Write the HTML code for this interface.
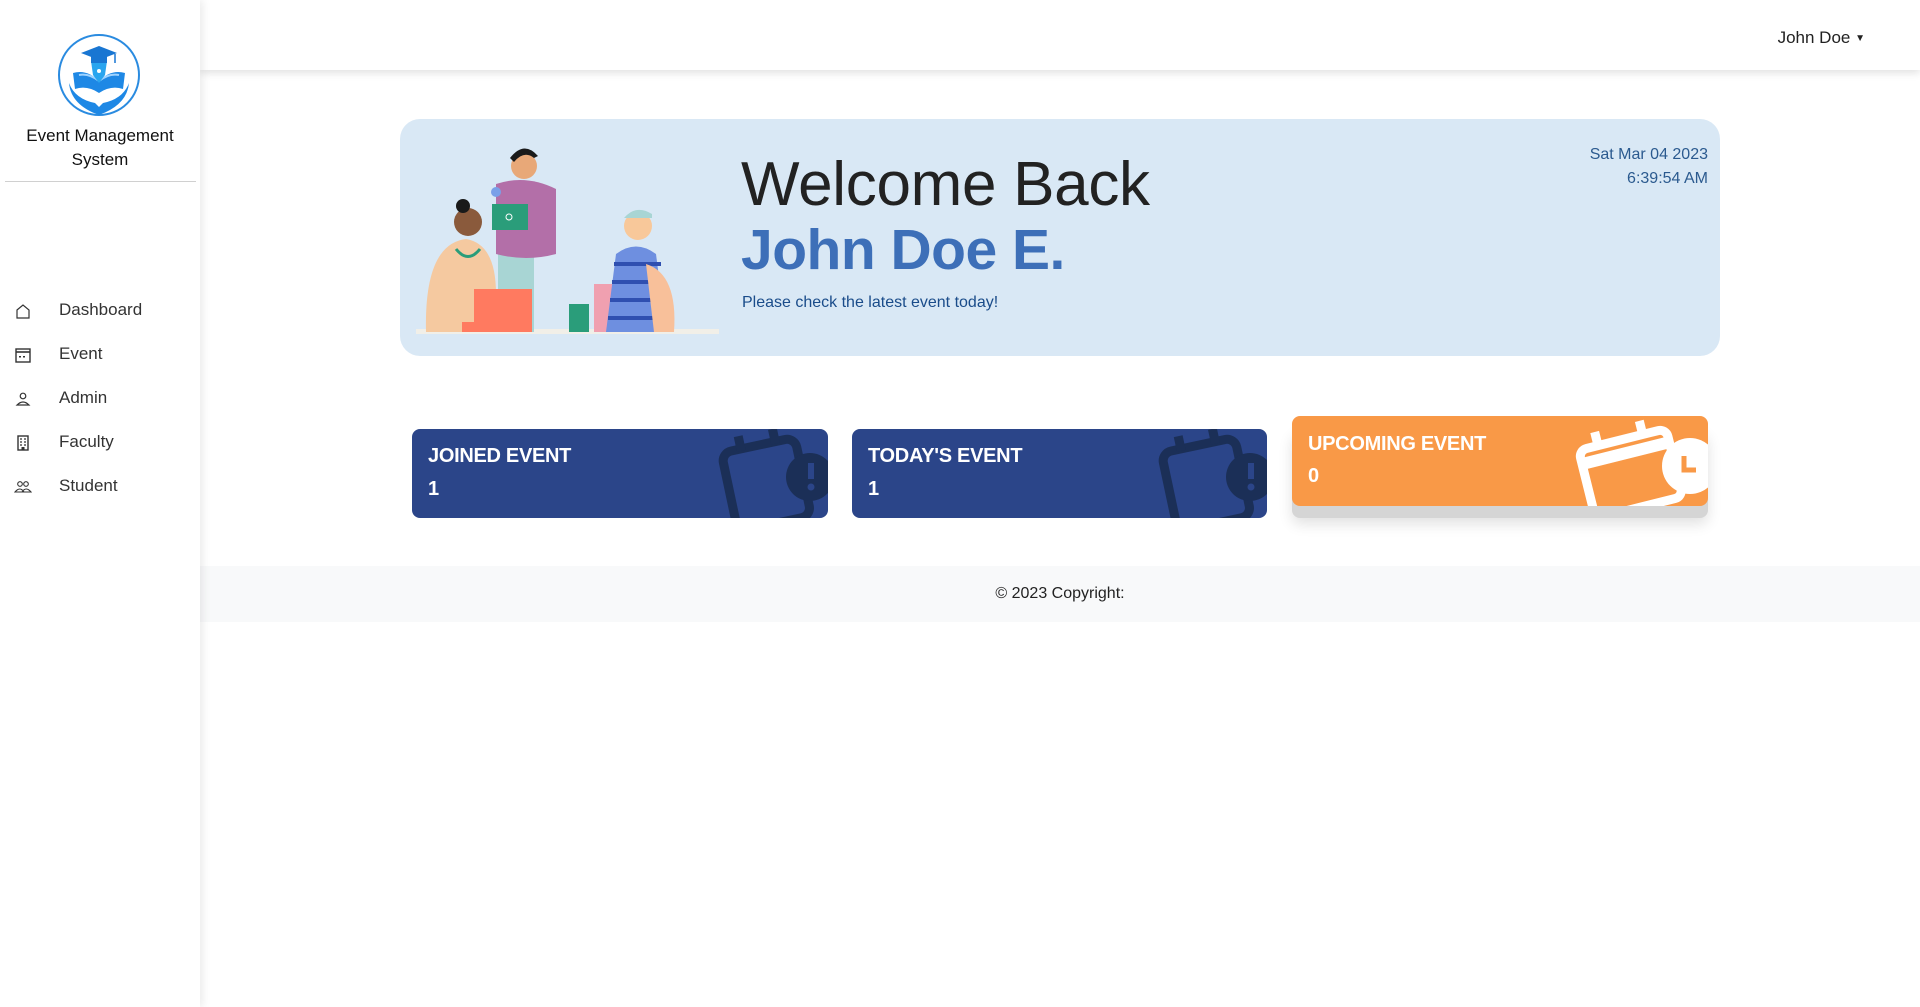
<!DOCTYPE html>
<html><head><meta charset="utf-8"><style>
*{box-sizing:border-box;margin:0;padding:0}
body{width:1920px;height:1007px;background:#fff;font-family:"Liberation Sans",sans-serif;position:relative;overflow:hidden;color:#212529}
.side{position:absolute;left:0;top:0;width:200px;height:1007px;background:#fff;box-shadow:3px 0 8px rgba(0,0,0,.08);z-index:3}
.top{position:absolute;left:200px;top:0;right:0;height:70px;background:#fff;box-shadow:0 3px 8px rgba(0,0,0,.12);z-index:2}
.nav{position:absolute;left:0;font-size:17px;color:#333}
.nav span{position:absolute;left:59px;top:-11px;white-space:nowrap}
.nav svg{position:absolute;left:14px;top:-9px}
.card{position:absolute;border-radius:8px;color:#fff;overflow:hidden}
.card .t{position:absolute;left:16px;font-size:20px;font-weight:bold;letter-spacing:-.3px}
.card .n{position:absolute;left:16px;font-size:20px;font-weight:bold}
</style></head><body>
<div class="side">
<svg style="position:absolute;left:57px;top:33px" width="84" height="84" viewBox="0 0 84 84">
<circle cx="42" cy="42" r="40" fill="none" stroke="#2a8be0" stroke-width="2"/>
<path d="M12 50 Q14 72 42 82 Q70 72 72 50 Q66 66 46 70 L42 74 L38 70 Q18 66 12 50Z" fill="#1e88e5"/>
<path d="M16 40 Q30 36 42 48 Q54 36 68 40 L66 56 Q54 52 42 60 Q30 52 18 56Z" fill="#1e88e5"/>
<path d="M22 42 Q32 40 42 48 Q52 40 62 42" stroke="#9fd3ff" stroke-width="2" fill="none"/>
<path d="M34 28 L50 28 L48 42 L42 50 L36 42Z" fill="#29a5ef"/>
<path d="M24 20 L42 13 L60 20 L42 27Z" fill="#1976d2"/>
<path d="M34 23 L34 30 L50 30 L50 23" fill="#1976d2"/>
<line x1="58" y1="21" x2="58" y2="30" stroke="#1976d2" stroke-width="1.5"/>
<circle cx="42" cy="38" r="2" fill="#fff"/>
</svg>
<div style="position:absolute;left:0;width:200px;top:124px;text-align:center;font-size:17px;line-height:24px;color:#111">Event Management<br>System</div>
<div style="position:absolute;left:5px;width:191px;top:181px;height:1px;background:#d0d0d0"></div>
<div class="nav" style="top:311px"><svg width="18" height="18" viewBox="0 0 18 18"><path d="M3 8 L9 3 L15 8 V16 H3Z" fill="none" stroke="#333" stroke-width="1.2"/></svg><span>Dashboard</span></div>
<div class="nav" style="top:355px"><svg width="18" height="18" viewBox="0 0 18 18"><rect x="2" y="3" width="14" height="13" fill="none" stroke="#333" stroke-width="1.4"/><line x1="2" y1="6" x2="16" y2="6" stroke="#333" stroke-width="1.6"/><rect x="5" y="10" width="2" height="1.5" fill="#333"/><rect x="9" y="10" width="2" height="1.5" fill="#333"/></svg><span>Event</span></div>
<div class="nav" style="top:399px"><svg width="18" height="18" viewBox="0 0 18 18"><circle cx="9" cy="6" r="2.8" fill="none" stroke="#333" stroke-width="1.2"/><path d="M3 15 Q9 9 15 15Z" fill="none" stroke="#333" stroke-width="1.2"/></svg><span>Admin</span></div>
<div class="nav" style="top:443px"><svg width="18" height="18" viewBox="0 0 18 18"><rect x="4" y="2" width="10" height="14" fill="none" stroke="#333" stroke-width="1.4"/><path d="M6 5h2M10 5h2M6 8h2M10 8h2M6 11h2M10 11h2" stroke="#333" stroke-width="1.3"/><rect x="7.5" y="13" width="3" height="3" fill="#333"/></svg><span>Faculty</span></div>
<div class="nav" style="top:487px"><svg width="18" height="18" viewBox="0 0 18 18"><circle cx="6" cy="6" r="2.3" fill="none" stroke="#333" stroke-width="1.1"/><circle cx="12" cy="6" r="2.3" fill="none" stroke="#333" stroke-width="1.1"/><path d="M1 14 Q6 8 10 14Z M8 14 Q12 8 17 14Z" fill="none" stroke="#333" stroke-width="1.1"/></svg><span>Student</span></div>
</div>
<div class="top"><div style="position:absolute;right:55px;top:28px;font-size:17px;color:#222">John Doe <span style="font-size:10px;vertical-align:2px">&#9660;</span></div></div>

<div style="position:absolute;left:400px;top:119px;width:1320px;height:237px;background:#d9e8f5;border-radius:20px">
<svg style="position:absolute;left:16px;top:25px" width="303" height="190" viewBox="0 0 303 190">
<rect x="0" y="185" width="303" height="5" fill="#f1efe8"/>
<path d="M10 188 Q8 100 50 95 Q80 100 80 150 L80 188Z" fill="#f5c9a0"/>
<circle cx="52" cy="78" r="14" fill="#8a5a3c"/><circle cx="47" cy="62" r="7" fill="#1a1a1a"/>
<path d="M40 105 Q52 120 64 105" stroke="#2a9d7a" stroke-width="3" fill="none"/>
<rect x="82" y="100" width="36" height="88" fill="#a8d5d4"/>
<path d="M80 40 Q110 30 140 45 L140 110 Q110 118 80 110Z" fill="#b36fa8"/>
<circle cx="108" cy="22" r="13" fill="#e8a878"/><path d="M94 14 Q108 -4 122 12 L118 14 Q108 6 98 18Z" fill="#1a1a1a"/>
<rect x="76" y="60" width="36" height="26" fill="#2a9d7a"/><circle cx="93" cy="73" r="3" fill="none" stroke="#fff"/>
<rect x="58" y="145" width="58" height="43" fill="#ff7a60"/><rect x="46" y="178" width="30" height="10" fill="#ff7a60"/>
<rect x="178" y="140" width="38" height="48" fill="#f0a0b0"/><rect x="153" y="160" width="20" height="28" fill="#2a9d7a"/>
<path d="M200 110 Q220 95 240 110 L250 188 L190 188Z" fill="#6e8fe0"/>
<path d="M198 120 H245 M196 138 H248 M194 156 H250 M192 174 H252" stroke="#2f4fb0" stroke-width="4"/>
<circle cx="222" cy="82" r="14" fill="#f8c89a"/><path d="M208 74 Q220 60 236 70 L236 74Z" fill="#a8d5d4"/>
<path d="M230 120 Q262 130 258 188 L238 188Z" fill="#f8c09a"/>
<circle cx="80" cy="48" r="5" fill="#7aa0e8"/>
</svg>
<div style="position:absolute;left:341px;top:30px;font-size:62px;color:#222;font-weight:300;letter-spacing:-.3px">Welcome Back</div>
<div style="position:absolute;left:341px;top:98px;font-size:57px;color:#3d6fb8;font-weight:bold;letter-spacing:-.5px">John Doe E.</div>
<div style="position:absolute;left:342px;top:175px;font-size:16px;color:#1a4c8a">Please check the latest event today!</div>
<div style="position:absolute;right:12px;top:24px;font-size:16px;line-height:24px;color:#2b5a8f;text-align:right">Sat Mar 04 2023<br>6:39:54 AM</div>
</div>

<div class="card" style="left:412px;top:429px;width:416px;height:89px;background:#2b4589">
<div class="t" style="top:16px">JOINED EVENT</div><div class="n" style="top:49px">1</div>
<svg style="position:absolute;left:300px;top:-4px" width="120" height="100" viewBox="0 0 120 100"><g transform="rotate(-12 60 50)" fill="none" stroke="#1b2f57" stroke-width="9"><rect x="15" y="18" width="75" height="80" rx="10"/><line x1="35" y1="5" x2="35" y2="20"/><line x1="70" y1="5" x2="70" y2="20"/></g><circle cx="98" cy="52" r="24" fill="#1b2f57"/><rect x="96" y="38" width="6" height="16" fill="#2b4589"/><circle cx="99" cy="62" r="3.5" fill="#2b4589"/></svg>
</div>
<div class="card" style="left:852px;top:429px;width:415px;height:89px;background:#2b4589">
<div class="t" style="top:16px">TODAY'S EVENT</div><div class="n" style="top:49px">1</div>
<svg style="position:absolute;left:300px;top:-4px" width="120" height="100" viewBox="0 0 120 100"><g transform="rotate(-12 60 50)" fill="none" stroke="#1b2f57" stroke-width="9"><rect x="15" y="18" width="75" height="80" rx="10"/><line x1="35" y1="5" x2="35" y2="20"/><line x1="70" y1="5" x2="70" y2="20"/></g><circle cx="98" cy="52" r="24" fill="#1b2f57"/><rect x="96" y="38" width="6" height="16" fill="#2b4589"/><circle cx="99" cy="62" r="3.5" fill="#2b4589"/></svg>
</div>
<div style="position:absolute;left:1292px;top:430px;width:416px;height:88px;background:#d5d5d5;border-radius:8px;box-shadow:0 6px 14px rgba(0,0,0,.12)"></div>
<div class="card" style="left:1292px;top:416px;width:416px;height:90px;background:#f99947">
<div class="t" style="top:17px">UPCOMING EVENT</div><div class="n" style="top:49px">0</div>
<svg style="position:absolute;left:280px;top:0" width="136" height="90" viewBox="0 0 136 90"><g transform="rotate(-14 60 50)" fill="none" stroke="#fff" stroke-width="9"><rect x="12" y="22" width="90" height="70" rx="8"/><line x1="12" y1="36" x2="100" y2="36" stroke-width="12"/><line x1="32" y1="8" x2="32" y2="22"/><line x1="78" y1="8" x2="78" y2="22"/></g><circle cx="118" cy="50" r="28" fill="#fff"/><path d="M112 40 V54 H124" stroke="#f99947" stroke-width="5" fill="none"/></svg>
</div>

<div style="position:absolute;left:200px;top:566px;right:0;height:56px;background:#f8f9fa"><div style="text-align:center;line-height:56px;font-size:16px;color:#222">© 2023 Copyright:</div></div>
</body></html>
